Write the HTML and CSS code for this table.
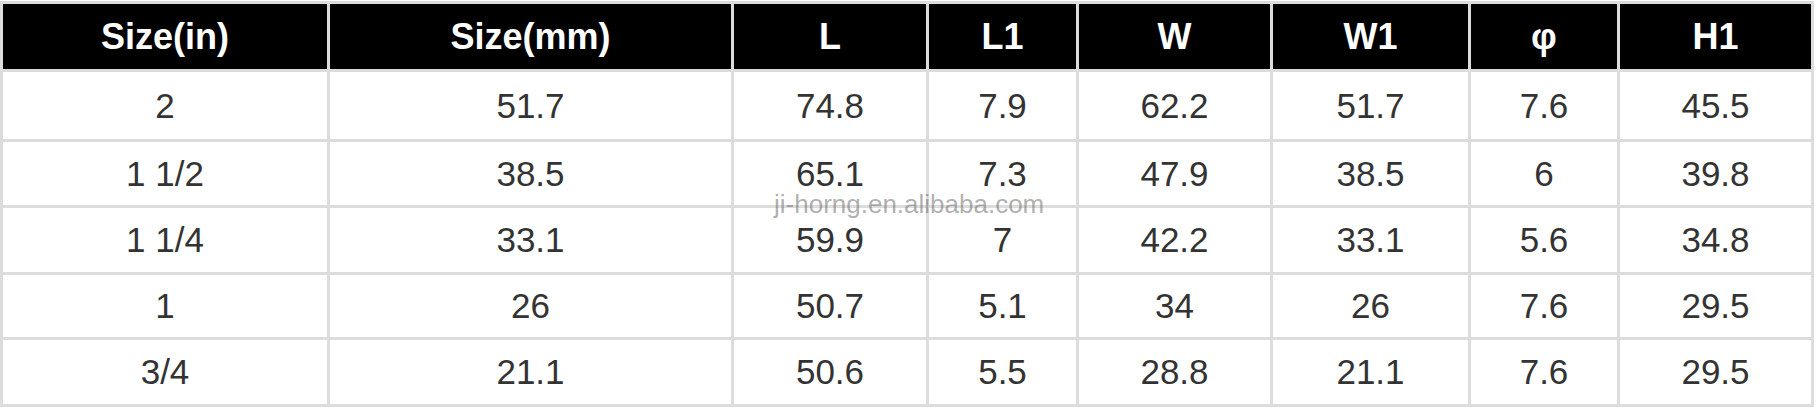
FILE: index.html
```html
<!DOCTYPE html>
<html>
<head>
<meta charset="utf-8">
<link rel="stylesheet" href="styles.css">
</head>
<body>
<div class="wrap">
<table class="spec">
  <thead>
    <tr class="r0">
      <th class="c1">Size(in)</th><th class="c2">Size(mm)</th><th class="c3">L</th><th class="c4">L1</th><th class="c5">W</th><th class="c6">W1</th><th class="c7">φ</th><th class="c8">H1</th>
    </tr>
  </thead>
  <tbody>
    <tr class="r1"><td>2</td><td>51.7</td><td>74.8</td><td>7.9</td><td>62.2</td><td>51.7</td><td>7.6</td><td>45.5</td></tr>
    <tr class="r2"><td>1 1/2</td><td>38.5</td><td>65.1</td><td>7.3</td><td>47.9</td><td>38.5</td><td>6</td><td>39.8</td></tr>
    <tr class="r3"><td>1 1/4</td><td>33.1</td><td>59.9</td><td>7</td><td>42.2</td><td>33.1</td><td>5.6</td><td>34.8</td></tr>
    <tr class="r4"><td>1</td><td>26</td><td>50.7</td><td>5.1</td><td>34</td><td>26</td><td>7.6</td><td>29.5</td></tr>
    <tr class="r5"><td>3/4</td><td>21.1</td><td>50.6</td><td>5.5</td><td>28.8</td><td>21.1</td><td>7.6</td><td>29.5</td></tr>
  </tbody>
</table>
<div class="watermark">ji-horng.en.alibaba.com</div>
</div>
</body>
</html>
```

FILE: styles.css
```css
html, body {
  margin: 0;
  padding: 0;
  background: #fff;
}
.wrap {
  position: relative;
  padding-top: 1px;
}
.spec {
  border-collapse: separate;
  border-spacing: 0;
  table-layout: fixed;
  width: 1814px;
  border-left: 3px solid #dcdcdc;
  border-top: 3px solid #dcdcdc;
  font-family: "Liberation Sans", Arial, sans-serif;
}
.spec th, .spec td {
  box-sizing: border-box;
  border-right: 3px solid #dcdcdc;
  border-bottom: 3px solid #dcdcdc;
  padding: 0;
  text-align: center;
  vertical-align: middle;
}
.spec th {
  background: #000;
  color: #fff;
  font-weight: bold;
  font-size: 36px;
}
.spec td {
  color: #333;
  font-size: 35px;
  background: #fff;
}
.c1 { width: 327px; }
.c2 { width: 404px; }
.c3 { width: 195px; }
.c4 { width: 150px; }
.c5 { width: 194px; }
.c6 { width: 198px; }
.c7 { width: 149px; }
.c8 { width: 194px; }
.r0 { height: 68px; }
.r1 { height: 70px; }
.r2 { height: 66px; }
.r3 { height: 67px; }
.r4 { height: 65px; }
.r5 { height: 67px; }
.watermark {
  position: absolute;
  left: 774px;
  top: 189px;
  font-family: "Liberation Sans", Arial, sans-serif;
  font-size: 26px;
  line-height: 30px;
  color: rgba(110, 110, 110, 0.55);
  white-space: nowrap;
}
```
